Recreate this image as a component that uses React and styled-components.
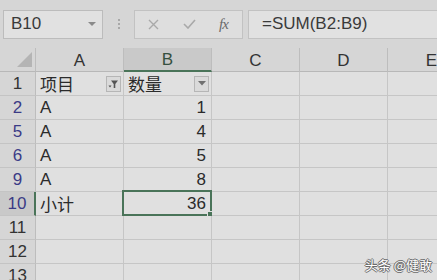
import React from "react";
import styled, { createGlobalStyle } from "styled-components";

const GlobalStyle = createGlobalStyle`
  html, body {
    margin: 0;
    padding: 0;
    background: #d6d6d6;
    overflow: hidden;
  }
  body {
    font-family: "Liberation Sans", "Noto Sans CJK SC", sans-serif;
    color: #2b2b2b;
  }
`;

const Screen = styled.div`
  position: relative;
  width: 437px;
  height: 280px;
  overflow: hidden;
  background: #d6d6d6;
`;

const FormulaBar = styled.div`
  display: flex;
  align-items: center;
  height: 48px;
  padding-left: 3px;
  box-sizing: border-box;
`;

const NameBox = styled.div`
  display: flex;
  align-items: center;
  justify-content: space-between;
  width: 100px;
  height: 29px;
  box-sizing: border-box;
  padding: 0 6px 0 7px;
  background: #e1e1e1;
  border: 1px solid #bcbcbc;
  font-size: 17px;
  color: #3a3a3a;
`;

const Caret = styled.span`
  width: 0;
  height: 0;
  border-left: 4px solid transparent;
  border-right: 4px solid transparent;
  border-top: 4px solid #8a8a8a;
`;

const Grip = styled.div`
  display: flex;
  flex-direction: column;
  gap: 2px;
  width: 31px;
  align-items: center;
  span {
    width: 2px;
    height: 2px;
    background: #a8a8a8;
  }
`;

const ActionBox = styled.div`
  display: flex;
  align-items: center;
  width: 109px;
  height: 29px;
  box-sizing: border-box;
  background: #dedede;
  border: 1px solid #c2c2c2;
  padding-left: 12px;
`;

const ActionIcon = styled.span`
  display: flex;
  justify-content: center;
  width: ${(p) => p.$w}px;
`;

const Fx = styled.span`
  font-family: "Liberation Serif", "DejaVu Serif", serif;
  font-style: italic;
  font-size: 15px;
  color: #6a6a6a;
  letter-spacing: -1px;
`;

const FormulaInput = styled.div`
  display: flex;
  align-items: center;
  flex: 1;
  margin-left: 5px;
  height: 29px;
  box-sizing: border-box;
  background: #e1e1e1;
  border: 1px solid #c2c2c2;
  border-right: none;
  padding-left: 13px;
  font-size: 17px;
  color: #3a3a3a;
`;

const Sheet = styled.div`
  display: grid;
  grid-template-columns: 36px repeat(5, 88px);
  grid-auto-rows: 24px;
`;

const ColHead = styled.div`
  display: flex;
  align-items: center;
  justify-content: center;
  box-sizing: border-box;
  background: ${(p) => (p.$active ? "#c9c9c9" : "#d6d6d6")};
  border-right: 1px solid #bdbdbd;
  border-bottom: ${(p) => (p.$active ? "2px solid #4a7459" : "1px solid #b8b8b8")};
  font-size: 17px;
  color: ${(p) => (p.$active ? "#35503f" : "#333")};
  padding-top: 2px;
`;

const Corner = styled.div`
  box-sizing: border-box;
  background: #d6d6d6;
  border-right: 1px solid #bdbdbd;
  border-bottom: 1px solid #b8b8b8;
  display: flex;
  align-items: flex-end;
  justify-content: flex-end;
  padding: 0 3px 4px 0;
`;

const Triangle = styled.span`
  width: 0;
  height: 0;
  border-left: 15px solid transparent;
  border-bottom: 15px solid #b4b4b4;
`;

const RowHead = styled.div`
  display: flex;
  align-items: center;
  justify-content: center;
  box-sizing: border-box;
  background: ${(p) => (p.$active ? "#c9c9c9" : "#d6d6d6")};
  border-bottom: 1px solid #c4c4c4;
  border-right: ${(p) => (p.$active ? "2px solid #4a7459" : "1px solid #bdbdbd")};
  font-size: 17px;
  color: ${(p) => (p.$filtered ? "#3b3b86" : "#333")};
`;

const Cell = styled.div`
  position: relative;
  display: flex;
  align-items: center;
  justify-content: ${(p) => (p.$num ? "flex-end" : "space-between")};
  box-sizing: border-box;
  background: #e0e0e0;
  border-right: 1px solid #c6c6c6;
  border-bottom: 1px solid #c6c6c6;
  padding: 0 5px 0 4px;
  font-size: 17px;
  color: #2b2b2b;
  white-space: nowrap;
`;

const FilterButton = styled.span`
  display: flex;
  align-items: center;
  justify-content: center;
  width: 15px;
  height: 16px;
  box-sizing: border-box;
  border: 1px solid #b6b6b6;
  background: #dadada;
  margin-right: -3px;
`;

const Selection = styled.div`
  position: absolute;
  left: -2px;
  top: -2px;
  right: -1px;
  bottom: -1px;
  border: 2px solid #4a7459;
  pointer-events: none;
`;

const FillHandle = styled.span`
  position: absolute;
  right: -5px;
  bottom: -5px;
  width: 6px;
  height: 6px;
  background: #4a7459;
  border: 1px solid #e0e0e0;
`;

const Watermark = styled.div`
  position: absolute;
  right: 5px;
  bottom: 6px;
  font-family: "Noto Sans CJK SC", sans-serif;
  font-size: 13px;
  color: #ffffff;
  text-shadow: 1px 0 0 #6a6a6a, -1px 0 0 #6a6a6a, 0 1px 0 #6a6a6a, 0 -1px 0 #6a6a6a;
`;

const columns = ["A", "B", "C", "D", "E"];

const rows = [
  { n: 1, a: "项目", b: "数量", header: true },
  { n: 2, a: "A", b: "1", filtered: true },
  { n: 5, a: "A", b: "4", filtered: true },
  { n: 6, a: "A", b: "5", filtered: true },
  { n: 9, a: "A", b: "8", filtered: true },
  { n: 10, a: "小计", b: "36", filtered: true, active: true },
  { n: 11 },
  { n: 12 },
  { n: 13 },
];

function FilterIcon({ applied }) {
  return (
    <FilterButton>
      {applied ? (
        <svg width="11" height="10" viewBox="0 0 11 10">
          <path d="M3 1.5h7L7.3 5v4H5.7V5z" fill="#555" />
          <path d="M0.5 6.5h3L2 8.5z" fill="#555" />
        </svg>
      ) : (
        <svg width="8" height="5" viewBox="0 0 8 5">
          <path d="M0 0h8L4 4.5z" fill="#707070" />
        </svg>
      )}
    </FilterButton>
  );
}

function App() {
  return (
    <Screen>
      <GlobalStyle />
      <FormulaBar>
        <NameBox>
          B10
          <Caret />
        </NameBox>
        <Grip>
          <span />
          <span />
          <span />
        </Grip>
        <ActionBox>
          <ActionIcon $w={12}>
            <svg width="11" height="11" viewBox="0 0 11 11">
              <path d="M1 1l9 9M10 1l-9 9" stroke="#a9a9a9" strokeWidth="1.4" />
            </svg>
          </ActionIcon>
          <ActionIcon $w={60}>
            <svg width="13" height="10" viewBox="0 0 13 10">
              <path d="M1 5l4 4 7-8" stroke="#a9a9a9" strokeWidth="1.6" fill="none" />
            </svg>
          </ActionIcon>
          <Fx>fx</Fx>
        </ActionBox>
        <FormulaInput>=SUM(B2:B9)</FormulaInput>
      </FormulaBar>
      <Sheet>
        <Corner>
          <Triangle />
        </Corner>
        {columns.map((c) => (
          <ColHead key={c} $active={c === "B"}>
            {c}
          </ColHead>
        ))}
        {rows.map((r) => (
          <React.Fragment key={r.n}>
            <RowHead $filtered={r.filtered} $active={r.active}>
              {r.n}
            </RowHead>
            <Cell>
              {r.a}
              {r.header && <FilterIcon applied />}
            </Cell>
            <Cell $num={!r.header}>
              {r.header ? (
                <>
                  {r.b}
                  <FilterIcon />
                </>
              ) : (
                r.b
              )}
              {r.active && (
                <Selection>
                  <FillHandle />
                </Selection>
              )}
            </Cell>
            <Cell />
            <Cell />
            <Cell />
          </React.Fragment>
        ))}
      </Sheet>
      <Watermark>头条 @健敢</Watermark>
    </Screen>
  );
}

export default App;
